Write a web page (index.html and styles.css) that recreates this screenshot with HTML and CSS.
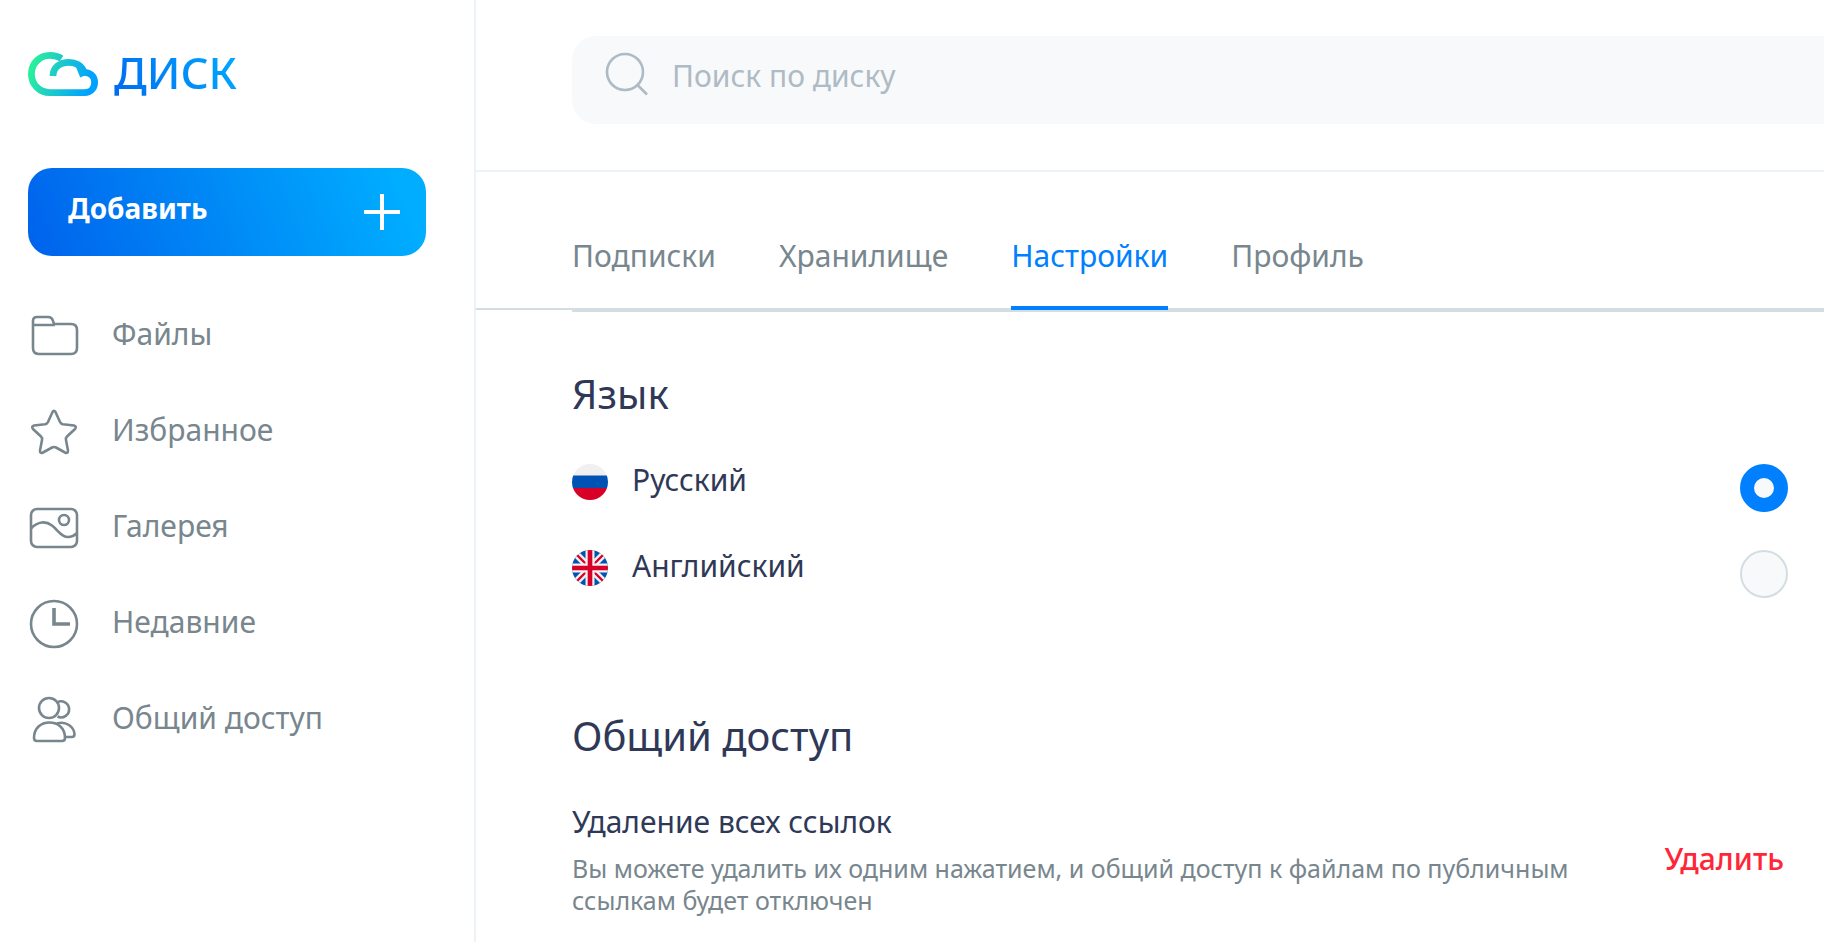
FILE: index.html
```html
<!DOCTYPE html>
<html lang="ru">
<head>
<meta charset="utf-8">
<title>Диск</title>
<link rel="stylesheet" href="styles.css">
</head>
<body>
<div class="app">
  <aside class="sidebar">
    <a class="logo" href="#">
      <svg class="logo-icon" viewBox="0 0 70 44" width="70" height="44" fill="none" stroke="url(#cloud)" stroke-width="6.8" aria-hidden="true">
        <defs><linearGradient id="cloud" gradientUnits="userSpaceOnUse" x1="4" y1="14" x2="62" y2="32"><stop offset="0" stop-color="#28ef9c"/><stop offset=".45" stop-color="#1cc8cb"/><stop offset="1" stop-color="#00a2ff"/></linearGradient></defs>
        <path d="M33.500 6.500C30 4.200 27 3.400 22 3.400C11.600 3.400 3.400 11.500 3.400 22C3.400 32.500 11.600 40.600 22 40.600H56.500C62.500 40.600 66.600 36.300 66.600 30.500C66.600 24.700 62.500 20.300 56 20.300C53.500 13.500 47.500 10.300 41 10.300C32 10.300 25 15.500 25 24"/>
        <path d="M50.500 14.500L54.500 24.500" stroke-width="5"/>
      </svg>
      <span class="logo-text">ДИСК</span>
    </a>
    <button class="add" type="button">
      <span class="add-label">Добавить</span>
      <svg viewBox="0 0 36 36" width="36" height="36" stroke="#fff" stroke-width="4" aria-hidden="true"><path d="M18 0V36M0 18H36"/></svg>
    </button>
    <nav class="nav">
      <a class="nav-item" href="#">
        <svg class="icon" viewBox="0 0 48 48" aria-hidden="true"><path d="M3 34V9Q3 5 7 5H18Q22 5 23 9L24 12H41Q47 12 47 18V36Q47 42 41 42H9Q3 42 3 36ZM3 13H25"/></svg>
        <span class="nav-label">Файлы</span>
      </a>
      <a class="nav-item" href="#">
        <svg class="icon" viewBox="0 0 48 48" aria-hidden="true"><path d="M22.500 4Q24 1.500 25.500 4L30 14Q31 16 33 16.300L44 17.500Q47 18.500 45 21L37 28.500Q35.500 30 36 32L38 42.500Q38 46 35 44.500L26 39.500Q24 38.500 22 39.500L13 44.500Q10 46 10 42.500L12 32Q12.500 30 11 28.500L3 21Q1 18.500 4 17.500L15 16.300Q17 16 18 14Z"/></svg>
        <span class="nav-label">Избранное</span>
      </a>
      <a class="nav-item" href="#">
        <svg class="icon" viewBox="0 0 48 48" aria-hidden="true"><rect x="1" y="5" width="46" height="38" rx="6"/><circle cx="34" cy="16" r="5"/><path d="M1 24.500C8 17 16 17 22 21.500C28 26 31 33 38 33Q43 33 47 29"/></svg>
        <span class="nav-label">Галерея</span>
      </a>
      <a class="nav-item" href="#">
        <svg class="icon" viewBox="0 0 48 48" aria-hidden="true"><circle cx="24" cy="24" r="23"/><path d="M24 8V24H40" stroke-width="3.600"/></svg>
        <span class="nav-label">Недавние</span>
      </a>
      <a class="nav-item" href="#">
        <svg class="icon" viewBox="0 0 48 48" aria-hidden="true"><circle cx="19" cy="12" r="10"/><path d="M27 6.500A8 8 0 1 1 27.500 20.500M4 42C4 32 11 26.500 19.500 26.500S35 32 35 42Q35 45 32 45H7Q4 45 4 42ZM27 27.500C36 24.500 44 31 44.500 38Q44.500 41 42 41H35"/></svg>
        <span class="nav-label">Общий доступ</span>
      </a>
    </nav>
  </aside>
  <div class="main">
    <header class="header">
      <label class="search">
        <svg class="search-icon" viewBox="0 0 42 42" width="42" height="42" aria-hidden="true"><circle cx="19" cy="19" r="18"/><path d="M31 31.500L41 41.500"/></svg>
        <input class="search-input" type="text" placeholder="Поиск по диску" aria-label="Поиск по диску">
      </label>
    </header>
    <div class="tabs-row">
      <nav class="tabs">
        <a class="tab" href="#">Подписки</a>
        <a class="tab" href="#">Хранилище</a>
        <a class="tab tab-active" href="#" aria-current="page">Настройки</a>
        <a class="tab" href="#">Профиль</a>
      </nav>
    </div>
    <main class="content">
      <section class="language">
        <h2 class="title">Язык</h2>
        <label class="option">
          <svg class="flag" viewBox="0 0 36 36" aria-hidden="true"><defs><clipPath id="round"><circle cx="18" cy="18" r="18"/></clipPath></defs><g clip-path="url(#round)"><rect width="36" height="12" fill="#f0f0f0"/><rect y="11.500" width="36" height="12.500" fill="#0052b4"/><rect y="24" width="36" height="12" fill="#d80027"/></g></svg>
          <span class="option-label">Русский</span>
          <input class="radio" type="radio" name="lang" checked>
        </label>
        <label class="option">
          <svg class="flag" viewBox="0 0 36 36" aria-hidden="true"><g clip-path="url(#round)"><rect width="36" height="36" fill="#0052b4"/><path d="M3 3L33 33M33 3L3 33" stroke="#f0f0f0" stroke-width="7"/><path d="M3 3L33 33M33 3L3 33" stroke="#d80027" stroke-width="2.400"/><path d="M18 0V36M0 18H36" stroke="#f0f0f0" stroke-width="9"/><path d="M18 0V36M0 18H36" stroke="#d80027" stroke-width="4.600"/></g></svg>
          <span class="option-label">Английский</span>
          <input class="radio" type="radio" name="lang">
        </label>
      </section>
      <section class="sharing">
        <h2 class="title">Общий доступ</h2>
        <div class="setting">
          <div class="setting-text">
            <h3 class="setting-name">Удаление всех ссылок</h3>
            <p class="setting-desc">Вы можете удалить их одним нажатием, и общий доступ к файлам по публичным ссылкам будет отключен</p>
          </div>
          <button class="delete" type="button">Удалить</button>
        </div>
      </section>
    </main>
  </div>
</div>
</body>
</html>
```
FILE: styles.css
```css
* {
  box-sizing: border-box;
}

body {
  margin: 0;
  background: #fff;
  color: #2f3957;
  font-family: "Noto Sans", sans-serif;
  font-size: 30px;
  line-height: 40px;
}

a {
  color: inherit;
  text-decoration: none;
}

h2,
h3,
p {
  margin: 0;
  font-weight: 400;
}

.app {
  display: flex;
  min-height: 100vh;
}

.sidebar {
  flex: none;
  width: 476px;
  padding: 44px 48px 0 28px;
  border-right: 2px solid #edf2f6;
}

.logo {
  display: flex;
  align-items: center;
  gap: 16px;
  height: 60px;
}

.logo-text {
  padding-bottom: 4px;
  background: linear-gradient(60deg, #0068f0, #00adff);
  background-clip: text;
  color: transparent;
  font-size: 44px;
  font-weight: 500;
  line-height: 60px;
}

.add {
  display: flex;
  justify-content: space-between;
  align-items: center;
  width: 100%;
  height: 88px;
  margin-top: 64px;
  padding: 0 26px 0 40px;
  border: 0;
  border-radius: 24px;
  background: linear-gradient(68deg, #0062ec, #00adff 92%);
  color: #fff;
  font: inherit;
  font-size: 28px;
  font-weight: 700;
}

.add-label {
  padding-bottom: 8px;
}

.nav {
  display: flex;
  flex-direction: column;
  gap: 48px;
  margin-top: 56px;
}

.nav-item {
  display: flex;
  align-items: center;
  gap: 34px;
  height: 48px;
  padding-left: 2px;
  color: #78868e;
}

.nav-label {
  padding-bottom: 5px;
}

.icon {
  flex: none;
  width: 48px;
  height: 48px;
  overflow: visible;
  fill: none;
  stroke: #78868e;
  stroke-width: 2.6;
}

.main {
  flex: 1;
  min-width: 0;
}

.header {
  padding: 36px 0 46px 96px;
  border-bottom: 2px solid #edf2f6;
}

.search {
  display: flex;
  align-items: center;
  gap: 24px;
  height: 88px;
  padding: 0 34px 12px;
  border-radius: 24px 0 0 24px;
  background: #f8f9fb;
}

.search-icon {
  flex: none;
  overflow: visible;
  fill: none;
  stroke: #afbbc4;
  stroke-width: 2.6;
}

.search-input {
  flex: 1;
  min-width: 0;
  padding: 4px 0 0;
  border: 0;
  outline: 0;
  background: none;
  color: #2f3957;
  font: inherit;
}

.search-input::placeholder {
  color: #afbbc4;
  opacity: 1;
}

.tabs-row {
  padding-left: 96px;
  background: linear-gradient(#d4dde2, #d4dde2) 0 136px / 96px 2px no-repeat;
}

.tabs {
  display: flex;
  gap: 63px;
  height: 140px;
  padding-top: 64px;
  border-bottom: 4px solid #d4dde2;
  color: #78868e;
}

.tab {
  height: 74px;
}

.tab-active {
  border-bottom: 4px solid #0080ff;
  color: #0080ff;
}

.content {
  padding: 56px 36px 24px 96px;
}

.title {
  font-size: 40px;
  line-height: 52px;
}

.option {
  display: flex;
  align-items: flex-start;
  height: 48px;
  margin-top: 38px;
}

.title + .option {
  margin-top: 44px;
}

.flag {
  flex: none;
  width: 36px;
  height: 36px;
  margin-right: 24px;
}

.option-label {
  flex: 1;
  margin-top: -4px;
}

.radio {
  appearance: none;
  width: 48px;
  height: 48px;
  margin: 0;
  border: 2px solid #d4dde2;
  border-radius: 50%;
  background: #f8f9fb;
}

.radio:checked {
  border: 14px solid #0080ff;
}

.sharing {
  margin-top: 112px;
}

.setting {
  display: flex;
  justify-content: space-between;
  align-items: center;
  margin-top: 40px;
}

.setting-text {
  max-width: 1040px;
}

.setting-name {
  font-size: 30px;
  line-height: 40px;
}

.setting-desc {
  margin-top: 10px;
  color: #78868e;
  font-size: 25px;
  line-height: 32px;
}

.delete {
  padding: 0 4px;
  border: 0;
  background: none;
  color: #ff2638;
  font: inherit;
  font-weight: 500;
}
```
